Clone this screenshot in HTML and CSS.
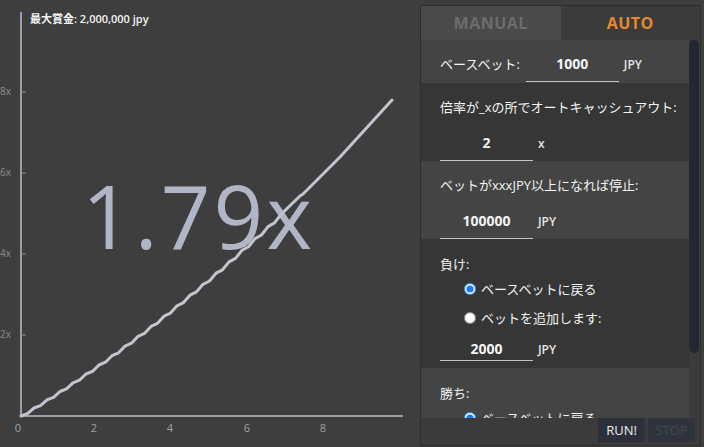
FILE: index.html
```html
<!DOCTYPE html>
<html lang="ja">
<head>
    <meta charset="UTF-8">
    <meta name="viewport" content="width=device-width, initial-scale=1.0">
    <title>Crash - オートベット</title>
    <link rel="stylesheet" href="styles.css">
</head>
<body>
    <div class="game">
        <!-- グラフ -->
        <div class="graph">
            <svg class="chart" width="420" height="447" viewBox="0 0 420 447">
                <text class="chart-title" x="30" y="23">最大賞金: 2,000,000 jpy</text>

                <text class="multiplier" x="82" y="249" textLength="230" lengthAdjust="spacing">1.79x</text>

                <path class="axis" d="M21 12 V416 H403"></path>
                <path class="tick" d="M22 92h4 M22 173h4 M22 254h4 M22 335h4"></path>

                <text class="y-label" x="11" y="95">8x</text>
                <text class="y-label" x="11" y="176">6x</text>
                <text class="y-label" x="11" y="257">4x</text>
                <text class="y-label" x="11" y="338">2x</text>

                <text class="x-label" x="18" y="432">0</text>
                <text class="x-label" x="94" y="432">2</text>
                <text class="x-label" x="170" y="432">4</text>
                <text class="x-label" x="247" y="432">6</text>
                <text class="x-label" x="323" y="432">8</text>

                <path class="curve" d="M21 416
                    l6.5 -2.4 l6.5 -5.6 l6.5 -2.4 l6.5 -5.7 l6.5 -2.5 l6.5 -5.9 l6.5 -2.6 l6.5 -6.0
                    l6.5 -2.7 l6.5 -6.2 l6.5 -2.7 l6.5 -6.3 l6.5 -2.8 l6.5 -6.5 l6.5 -2.9 l6.5 -6.7
                    l6.5 -2.9 l6.5 -6.8 l6.5 -3.0 l6.5 -7.0 l6.5 -3.1 l6.5 -7.1 l6.5 -3.1 l6.5 -7.3
                    l6.5 -3.2 l6.5 -7.4 l6.5 -3.3 l6.5 -7.6 l6.5 -3.3 l6.5 -7.8 l6.5 -3.4 l6.5 -7.9
                    l6.5 -3.5 l6.5 -8.1 l6.5 -3.5 l6.5 -8.2 l6.5 -3.6 l6.5 -8.4 l6.5 -3.7 l6.5 -8.5
                    L300 196 l3 -2 L340 157 L392 100"></path>
            </svg>
        </div>

        <!-- 設定パネル -->
        <div class="panel">
            <div class="tabs">
                <div class="tab">MANUAL</div>
                <div class="tab tab-active">AUTO</div>
            </div>

            <div class="panel-body">
                <div class="rows">
                    <div class="row row-light row-inline">
                        <span class="label">ベースベット:</span>
                        <input type="text" class="input" value="1000">
                        <span class="unit">JPY</span>
                    </div>

                    <div class="row row-dark">
                        <div class="label">倍率が_xの所でオートキャッシュアウト:</div>
                        <div class="field">
                            <input type="text" class="input" value="2">
                            <span class="unit">x</span>
                        </div>
                    </div>

                    <div class="row row-light">
                        <div class="label">ベットがxxxJPY以上になれば停止:</div>
                        <div class="field">
                            <input type="text" class="input" value="100000">
                            <span class="unit">JPY</span>
                        </div>
                    </div>

                    <div class="row row-dark row-options">
                        <div class="label">負け:</div>
                        <label class="option"><input type="radio" name="lose" checked> ベースベットに戻る</label>
                        <label class="option"><input type="radio" name="lose"> ベットを追加します:</label>
                        <div class="field field-small">
                            <input type="text" class="input" value="2000">
                            <span class="unit">JPY</span>
                        </div>
                    </div>

                    <div class="row row-light row-options">
                        <div class="label">勝ち:</div>
                        <label class="option"><input type="radio" name="win" checked> ベースベットに戻る</label>
                        <label class="option"><input type="radio" name="win"> ベットを追加します:</label>
                        <div class="field field-small">
                            <input type="text" class="input" value="2000">
                            <span class="unit">JPY</span>
                        </div>
                    </div>
                </div>

                <div class="scrollbar">
                    <div class="scroll-thumb"></div>
                </div>
            </div>

            <div class="actions">
                <button class="button">RUN!</button>
                <button class="button button-disabled">STOP</button>
            </div>
        </div>
    </div>
</body>
</html>
```

FILE: styles.css
```css
* {
    box-sizing: border-box;
}

body {
    margin: 0;
    background-color: #3e3e3e;
    font-family: "Open Sans", "Noto Sans CJK JP", sans-serif;
    color: #f2f2f2;
    overflow: hidden;
}

.game {
    display: flex;
    width: 704px;
    height: 447px;
}

/* グラフ */
.graph {
    flex: none;
    width: 420px;
    height: 447px;
}

.chart {
    display: block;
}

.chart-title {
    font-family: "Open Sans", "Noto Sans CJK JP", sans-serif;
    font-size: 11px;
    font-weight: 600;
    fill: #f4f4f4;
}

.multiplier {
    font-family: "Open Sans", sans-serif;
    font-size: 87px;
    fill: #b2b5c6;
}

.axis {
    fill: none;
    stroke: #9d9da8;
    stroke-width: 2;
}

.tick {
    stroke: #8a8a94;
    stroke-width: 1;
}

.y-label {
    font-size: 10px;
    fill: #8c8c8c;
    text-anchor: end;
}

.x-label {
    font-size: 11px;
    fill: #a0a0a0;
    text-anchor: middle;
}

.curve {
    fill: none;
    stroke: #c2c4ce;
    stroke-width: 3;
    stroke-linejoin: round;
    stroke-linecap: round;
}

/* パネル */
.panel {
    flex: none;
    display: flex;
    flex-direction: column;
    width: 281px;
    height: 441px;
    margin-top: 5px;
    background-color: #3b3b3b;
    border: 1px solid #2e2e2e;
}

.tabs {
    display: flex;
    height: 34px;
}

.tab {
    flex: 1;
    display: flex;
    align-items: center;
    justify-content: center;
    font-size: 16px;
    font-weight: bold;
    letter-spacing: 0.5px;
    color: #6c6c6c;
    background-color: #4a4a4a;
}

.tab-active {
    color: #e68a2e;
    background-color: #3b3b3b;
}

.panel-body {
    display: flex;
    height: 378px;
    overflow: hidden;
}

.rows {
    flex: 1;
    overflow: hidden;
}

.row {
    padding: 14px 0 0 19px;
}

.row-light { background-color: #444444; }
.row-dark { background-color: #363636; }

.row-inline {
    display: flex;
    align-items: center;
    height: 43px;
    padding: 6px 0 1px 19px;
}

.row-inline .input {
    margin-left: 6px;
    margin-right: 5px;
}

.row-options {
    padding-top: 15px;
    padding-bottom: 7px;
}

.label {
    font-size: 13px;
    line-height: 20px;
    color: #f2f2f2;
}

.field {
    display: flex;
    align-items: center;
    gap: 5px;
    margin-top: 8px;
}

.field-small {
    margin-top: 5px;
}

.input {
    width: 93px;
    height: 36px;
    padding: 0;
    border: none;
    border-bottom: 1px solid #c4c4c4;
    background: transparent;
    color: #f4f4f4;
    font-family: "Open Sans", sans-serif;
    font-size: 14px;
    font-weight: bold;
    text-align: center;
    outline: none;
}

.field-small .input {
    height: 24px;
}

.unit {
    font-size: 12px;
    font-weight: 600;
    color: #e6e6e6;
}

.option {
    display: flex;
    align-items: center;
    height: 29px;
    padding-left: 24px;
    font-size: 13px;
    color: #f2f2f2;
}

.option input {
    width: 12px;
    height: 12px;
    margin: 0 5px 0 0;
    accent-color: #1a7cf0;
}

.scrollbar {
    flex: none;
    width: 11px;
}

.scroll-thumb {
    width: 10px;
    height: 313px;
    border-radius: 5px;
    background-color: #23272f;
}

.actions {
    display: flex;
    justify-content: flex-end;
    gap: 3px;
    padding: 0 5px 0 0;
}

.button {
    width: 47px;
    height: 24px;
    padding: 0;
    border: none;
    background-color: #2b303a;
    color: #ececec;
    font-family: "Open Sans", sans-serif;
    font-size: 13px;
    cursor: pointer;
}

.button-disabled {
    background-color: #2f333b;
    color: #434853;
    cursor: default;
}
```
